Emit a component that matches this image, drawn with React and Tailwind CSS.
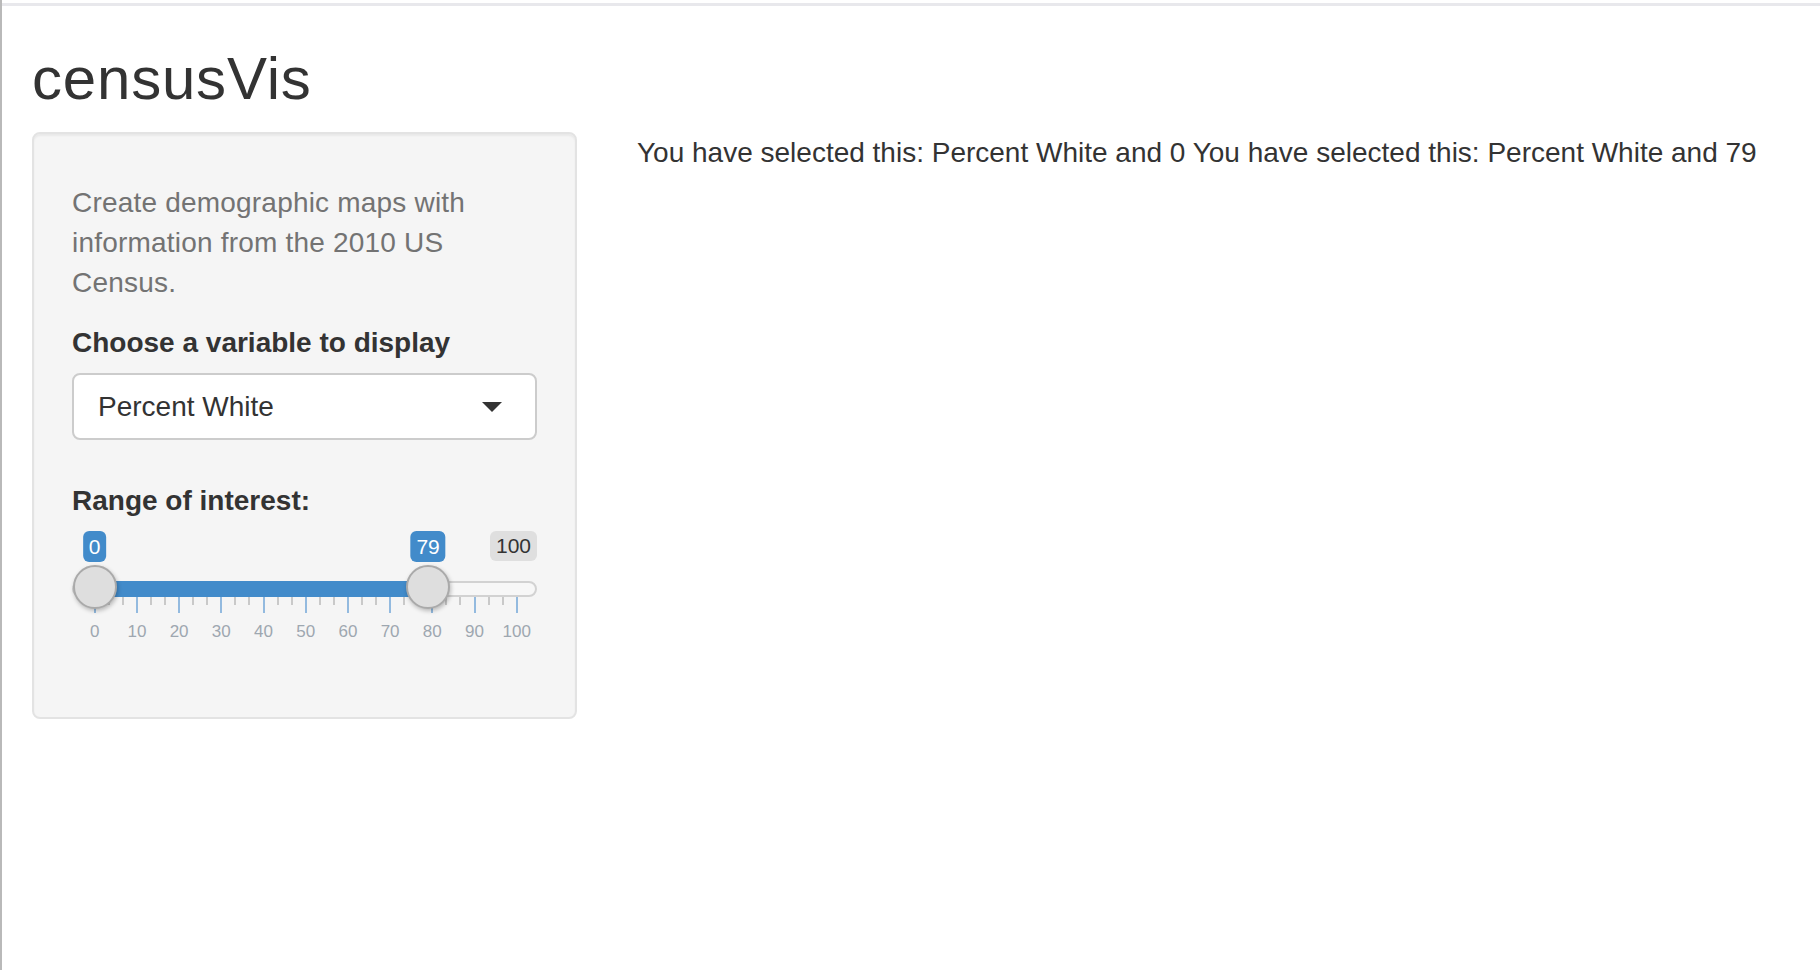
import React from "react";

const majors = [0, 10, 20, 30, 40, 50, 60, 70, 80, 90, 100];
const X0 = 22.7;
const SPAN = 422;
const px = (v) => X0 + (v / 100) * SPAN;

function RangeSlider() {
  const from = 0;
  const to = 79;
  const minors = [];
  for (let i = 0; i < 10; i++) {
    minors.push(i * 10 + 10 / 3, i * 10 + 20 / 3);
  }
  return (
    <div className="relative h-[118px] w-full">
      {/* value badges */}
      <div
        className="absolute top-0 h-[31px] px-[6px] rounded-[6px] bg-[#428bca] text-white text-[21px] leading-[31px] -translate-x-1/2"
        style={{ left: px(from) }}
      >
        0
      </div>
      <div
        className="absolute top-0 h-[31px] px-[6px] rounded-[6px] bg-[#428bca] text-white text-[21px] leading-[31px] -translate-x-1/2"
        style={{ left: px(to) }}
      >
        79
      </div>
      <div className="absolute top-0 right-0 h-[30px] px-[6px] rounded-[6px] bg-[#dfdfdf] text-[#333] text-[21px] leading-[30px]">
        100
      </div>

      {/* track */}
      <div className="absolute left-0 right-0 top-[50px] h-[16px] rounded-full bg-[#f7f7f7] border-2 border-[#d2d2d2]" />
      <div
        className="absolute top-[50px] h-[16px] bg-[#428bca]"
        style={{ left: px(from), width: px(to) - px(from) }}
      />

      {/* grid ticks */}
      {minors.map((v) => (
        <div
          key={"m" + v}
          className="absolute top-[66px] h-[8px] w-[2px] bg-[#c9c9c9] -translate-x-1/2"
          style={{ left: px(v) }}
        />
      ))}
      {majors.map((v) => (
        <div
          key={"M" + v}
          className="absolute top-[66px] h-[16px] w-[2px] bg-[#93badf] -translate-x-1/2"
          style={{ left: px(v) }}
        />
      ))}
      {majors.map((v) => (
        <div
          key={"L" + v}
          className="absolute top-[90px] text-[17px] leading-[22px] text-[#9ea7b0] -translate-x-1/2"
          style={{ left: px(v) }}
        >
          {v}
        </div>
      ))}

      {/* handles */}
      <div
        className="absolute top-[34px] h-[44px] w-[44px] rounded-full bg-[#dedede] border-2 border-[#aaaaaa] shadow-[1px_2px_4px_rgba(0,0,0,0.25)] -translate-x-1/2"
        style={{ left: px(from) }}
      />
      <div
        className="absolute top-[34px] h-[44px] w-[44px] rounded-full bg-[#dedede] border-2 border-[#aaaaaa] shadow-[1px_2px_4px_rgba(0,0,0,0.25)] -translate-x-1/2"
        style={{ left: px(to) }}
      />
    </div>
  );
}

export default function App() {
  return (
    <div className="min-h-screen w-full bg-white flex font-['Liberation_Sans',Arial,sans-serif] text-[#333]">
      <div className="w-[2px] shrink-0 bg-[#b9b9b9]" />
      <div className="flex-1">
        <div className="h-[3px]" />
        <div className="h-[3px] bg-[#e8e8ec]" />
        <div className="px-[30px]">
          <h2 className="mt-[40px] mb-[20px] text-[60px] leading-[66px] tracking-[0.8px] font-normal text-[#333]">
            censusVis
          </h2>
          <div className="flex gap-[60px] items-start">
            <div className="w-[545px] shrink-0 bg-[#f5f5f5] border-2 border-[#e3e3e3] rounded-[8px] p-[38px] shadow-[inset_0_2px_2px_rgba(0,0,0,0.05)]">
              <div className="mt-[11px] mb-[20px] text-[28px] leading-[40px] tracking-[0.2px] text-[#737373]">
                <span className="block">Create demographic maps with</span>
                <span className="block">information from the 2010 US</span>
                <span className="block">Census.</span>
              </div>
              <div className="mb-[41px]">
                <div className="mb-[10px] text-[28px] leading-[40px] font-bold text-[#333]">
                  Choose a variable to display
                </div>
                <div className="h-[67px] bg-white border-2 border-[#cccccc] rounded-[8px] flex items-center justify-between pl-[24px] pr-[33px]">
                  <span className="text-[28px] leading-[40px] text-[#333]">Percent White</span>
                  <span className="w-0 h-0 border-t-[10px] border-t-[#333] border-x-[10px] border-x-transparent" />
                </div>
              </div>
              <div className="mb-[30px]">
                <div className="mb-[10px] text-[28px] leading-[40px] font-bold text-[#333]">
                  Range of interest:
                </div>
                <RangeSlider />
              </div>
            </div>
            <div className="flex-1 pt-[1px] text-[28px] leading-[40px] text-[#333] whitespace-nowrap">
              You have selected this: Percent White and 0 You have selected this: Percent White and 79
            </div>
          </div>
        </div>
      </div>
    </div>
  );
}
